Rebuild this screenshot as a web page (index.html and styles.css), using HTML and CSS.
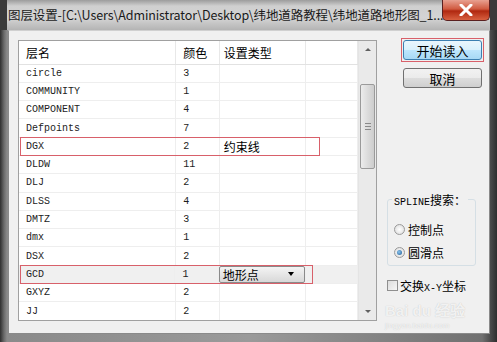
FILE: index.html
```html
<!DOCTYPE html>
<html lang="zh-CN">
<head>
    <meta charset="UTF-8">
    <title>图层设置</title>
    <link rel="stylesheet" href="styles.css">
</head>
<body>
    <div class="window">
        <!-- Title bar -->
        <div class="titlebar">
            <span class="title">图层设置-[C:\Users\Administrator\Desktop\纬地道路教程\纬地道路地形图_1...</span>
            <div class="close">
                <svg width="14" height="12" viewBox="0 0 14 12"><path d="M2 1 L12 11 M12 1 L2 11" stroke="#fff" stroke-width="3" stroke-linecap="round"/></svg>
            </div>
        </div>

        <div class="client">
            <!-- Layer list -->
            <div class="list">
                <div class="table">
                    <div class="row head">
                        <div class="c name">层名</div>
                        <div class="c color">颜色</div>
                        <div class="c type">设置类型</div>
                        <div class="c blank"></div>
                    </div>
                    <div class="row"><div class="c name">circle</div><div class="c color">3</div><div class="c type"></div><div class="c blank"></div></div>
                    <div class="row"><div class="c name">COMMUNITY</div><div class="c color">1</div><div class="c type"></div><div class="c blank"></div></div>
                    <div class="row"><div class="c name">COMPONENT</div><div class="c color">4</div><div class="c type"></div><div class="c blank"></div></div>
                    <div class="row"><div class="c name">Defpoints</div><div class="c color">7</div><div class="c type"></div><div class="c blank"></div></div>
                    <div class="row mark-wide"><div class="c name">DGX</div><div class="c color">2</div><div class="c type">约束线</div><div class="c blank"></div></div>
                    <div class="row"><div class="c name">DLDW</div><div class="c color">11</div><div class="c type"></div><div class="c blank"></div></div>
                    <div class="row"><div class="c name">DLJ</div><div class="c color">2</div><div class="c type"></div><div class="c blank"></div></div>
                    <div class="row"><div class="c name">DLSS</div><div class="c color">4</div><div class="c type"></div><div class="c blank"></div></div>
                    <div class="row"><div class="c name">DMTZ</div><div class="c color">3</div><div class="c type"></div><div class="c blank"></div></div>
                    <div class="row"><div class="c name">dmx</div><div class="c color">1</div><div class="c type"></div><div class="c blank"></div></div>
                    <div class="row"><div class="c name">DSX</div><div class="c color">2</div><div class="c type"></div><div class="c blank"></div></div>
                    <div class="row selected mark-narrow">
                        <div class="c name">GCD</div><div class="c color">1</div>
                        <div class="c type">
                            <div class="combo"><span>地形点</span><span class="arrow"></span></div>
                        </div>
                        <div class="c blank"></div>
                    </div>
                    <div class="row"><div class="c name">GXYZ</div><div class="c color">2</div><div class="c type"></div><div class="c blank"></div></div>
                    <div class="row"><div class="c name">JJ</div><div class="c color">2</div><div class="c type"></div><div class="c blank"></div></div>
                </div>
                <div class="scrollbar">
                    <div class="sb-arrow up"></div>
                    <div class="sb-track">
                        <div class="thumb"><span class="grip"></span></div>
                    </div>
                    <div class="sb-arrow down"></div>
                </div>
            </div>

            <!-- Right side controls -->
            <div class="side">
                <div class="btn-mark"><button class="btn primary">开始读入</button></div>
                <button class="btn">取消</button>

                <fieldset class="group">
                    <legend><span class="mono">SPLINE</span>搜索：</legend>
                    <label class="opt"><span class="radio"></span>控制点</label>
                    <label class="opt"><span class="radio on"></span>圆滑点</label>
                </fieldset>

                <label class="check"><span class="box"></span><span>交换<span class="mono">X-Y</span>坐标</span></label>
                <div class="watermark">Bai du 经验<small>jingyan.baidu.com</small></div>
            </div>
        </div>
    </div>
</body>
</html>
```

FILE: styles.css
```css
body {
    margin: 0;
    font-family: "Noto Sans CJK SC", "Liberation Sans", sans-serif;
    font-size: 12px;
    color: #000;
}

.window {
    width: 497px;
    height: 342px;
    background: linear-gradient(90deg, #2e2e2e 0, #6a6a6a 4px, #8a8a8a 7px, #9a9a9a 50%, #707070 97%, #2e2e2e 100%);
    display: flex;
    flex-direction: column;
    overflow: hidden;
}

.titlebar {
    height: 30px;
    display: flex;
    align-items: flex-start;
    background: linear-gradient(180deg, #9c9c9c 0, #cfcfcf 6px, #d4d4d4 18px, #b4b4b4 30px);
    border-left: 7px solid #3a3a3a;
    border-right: 7px solid #3a3a3a;
    position: relative;
}

.title {
    padding: 5px 0 0 1px;
    font-size: 12.5px;
    color: #1a1a1a;
    white-space: nowrap;
    letter-spacing: -0.1px;
}

.close {
    position: absolute;
    right: 0;
    top: 0;
    width: 46px;
    height: 20px;
    border: 1px solid #5a2020;
    border-top: none;
    border-radius: 0 0 5px 5px;
    background: linear-gradient(180deg, #e8a090 0, #d05a40 45%, #b02810 55%, #d86040 100%);
    display: flex;
    align-items: center;
    justify-content: center;
}

.client {
    margin: 0 7px 8px 8px;
    flex: 1;
    background: #f0f0f0;
    display: flex;
    border: 1px solid #8a8a8a;
    border-top-color: #d0d0d0;
}

.list {
    margin: 9px 0 0 9px;
    width: 357px;
    height: 279px;
    border: 1px solid #a0a0a0;
    background: #fff;
    display: flex;
}

.table {
    flex: 1;
    overflow: hidden;
}

.row {
    display: flex;
    height: 18.3px;
    border-bottom: 1px solid #eeeeee;
    box-sizing: border-box;
    position: relative;
}

.row .c {
    border-right: 1px solid #eeeeee;
    box-sizing: border-box;
    display: flex;
    align-items: center;
    font-family: "Liberation Mono", monospace;
    font-size: 10px;
    color: #1c1c1c;
    white-space: nowrap;
}

.row.head {
    height: 23.5px;
    border-bottom: 1px solid #e2e2e2;
}

.row.head .c {
    font-family: "Noto Sans CJK SC", sans-serif;
    font-size: 12px;
    color: #000;
    border-right-color: #e8e8e8;
}

.name { width: 159px; padding-left: 7px; }
.color { width: 44px; padding-left: 7px; }
.type { width: 87px; padding-left: 4px; }
.blank { width: 53px; }

.row .type {
    font-family: "Noto Sans CJK SC", sans-serif;
    font-size: 12px;
    color: #000;
}

.selected { background: #f0f0f0; }

.mark-wide::after,
.mark-narrow::after {
    content: "";
    position: absolute;
    left: 1px;
    top: -1px;
    bottom: -1px;
    border: 1px solid #d8606a;
}

.mark-wide::after { width: 298px; }
.mark-narrow::after { width: 291px; }

.combo {
    margin-left: -4px;
    width: 88px;
    height: 17px;
    border: 1px solid #8a8a8a;
    border-radius: 2px;
    background: linear-gradient(180deg, #f4f4f4, #e6e6e6 50%, #d8d8d8);
    display: flex;
    align-items: center;
    justify-content: space-between;
    padding: 0 10px 0 3px;
    box-sizing: border-box;
    font-family: "Noto Sans CJK SC", sans-serif;
    font-size: 12px;
}

.arrow {
    width: 0;
    height: 0;
    border-left: 3px solid transparent;
    border-right: 3px solid transparent;
    border-top: 4px solid #000;
}

.scrollbar {
    width: 17px;
    background: #eaeaea;
    border-left: 1px solid #e4e4e4;
    display: flex;
    flex-direction: column;
}

.sb-arrow {
    height: 17px;
    display: flex;
    align-items: center;
    justify-content: center;
}

.sb-arrow::before {
    content: "";
    border-left: 3px solid transparent;
    border-right: 3px solid transparent;
}

.up::before { border-bottom: 3px solid #606060; }
.down::before { border-top: 3px solid #606060; }

.sb-track {
    flex: 1;
    padding-top: 26px;
}

.thumb {
    height: 83px;
    margin: 0 1px;
    border: 1px solid #9a9a9a;
    border-radius: 2px;
    background: linear-gradient(90deg, #ececec, #dcdcdc 50%, #cdcdcd);
    display: flex;
    align-items: center;
    justify-content: center;
}

.grip {
    width: 6px;
    height: 5px;
    border-top: 1px solid #8a8a8a;
    border-bottom: 1px solid #8a8a8a;
    position: relative;
}

.grip::after {
    content: "";
    position: absolute;
    left: 0;
    right: 0;
    top: 2px;
    border-top: 1px solid #8a8a8a;
}

.side {
    flex: 1;
    display: flex;
    flex-direction: column;
    align-items: flex-start;
    padding: 7px 0 0 10px;
    position: relative;
}

.btn-mark {
    margin-left: 14px;
    border: 1px solid #d8606a;
    padding: 1px;
}

.btn {
    width: 79px;
    height: 20px;
    border: 1px solid #707070;
    border-radius: 3px;
    background: linear-gradient(180deg, #f2f2f2, #ebebeb 50%, #dddddd 51%, #cfcfcf);
    font-family: "Noto Sans CJK SC", sans-serif;
    font-size: 13px;
    padding: 0;
    line-height: 17px;
    color: #000;
}

.btn.primary {
    border-color: #3c7fb1;
    background: linear-gradient(180deg, #eaf6fd, #d9f0fc 50%, #bee6fd 51%, #a7d9f5);
}

.side > .btn {
    margin: 6px 0 0 16px;
}

.group {
    margin: 103px 0 0 0;
    width: 89px;
    height: 75px;
    border: 1px solid #d5dfe5;
    border-radius: 3px;
    padding: 0 0 0 6px;
    box-sizing: border-box;
}

.group legend {
    padding: 0 2px;
    margin-left: -2px;
    font-size: 12px;
}

.opt {
    display: flex;
    align-items: center;
    gap: 3px;
    font-size: 12px;
    height: 20px;
    margin-top: 3px;
}

.opt:first-of-type { margin-top: 11px; }

.radio {
    width: 11px;
    height: 11px;
    border-radius: 50%;
    border: 1px solid #9a9a9a;
    background: radial-gradient(circle, #ffffff 0, #e4e4e4 70%);
    box-sizing: border-box;
    display: flex;
    align-items: center;
    justify-content: center;
}

.radio.on::after {
    content: "";
    width: 5px;
    height: 5px;
    border-radius: 50%;
    background: radial-gradient(circle at 40% 40%, #8ac4f0, #1e5b90);
}

.check {
    margin-top: 11px;
    display: flex;
    align-items: center;
    gap: 2px;
    font-size: 12px;
}

.box {
    width: 11px;
    height: 11px;
    border: 1px solid #8f8f8f;
    background: linear-gradient(135deg, #dcdcdc, #f6f6f6);
    box-sizing: border-box;
}

.mono {
    font-family: "Liberation Mono", monospace;
    font-size: 10px;
}

.watermark {
    position: absolute;
    left: 8px;
    top: 272px;
    color: rgba(255, 255, 255, 0.8);
    font-family: "Liberation Sans", sans-serif;
    font-size: 15px;
    font-weight: bold;
    line-height: 15px;
    text-shadow: 0 0 1px #bdbdbd;
}

.watermark small {
    display: block;
    font-size: 8px;
    font-weight: normal;
}
```
